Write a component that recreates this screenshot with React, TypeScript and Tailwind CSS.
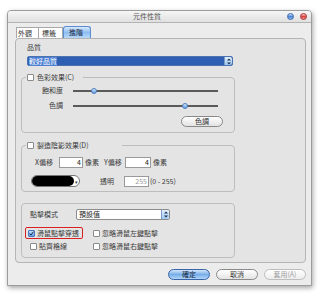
import React from "react";

const F = "font-['Noto_Sans_CJK_TC','Noto_Sans_CJK_SC',sans-serif]";

function Box({ checked }: { checked?: boolean }) {
  return checked ? (
    <span className="flex w-[7px] h-[7px] shrink-0 items-center justify-center rounded-[1px] border border-[#4a78c0] bg-gradient-to-b from-[#c4ddf6] to-[#5d9be0]">
      <svg width="5" height="5" viewBox="0 0 5 5">
        <path d="M0.5 2.5 L2 4 L4.6 0.6" stroke="#15284d" strokeWidth="1" fill="none" />
      </svg>
    </span>
  ) : (
    <span className="block w-[7px] h-[7px] shrink-0 rounded-[1px] border border-[#8a8a8a] bg-white" />
  );
}

function Stepper() {
  return (
    <span className="flex w-[8px] h-full shrink-0 flex-col items-center justify-center rounded-r-[2px] border-l border-[#7a9cc8] bg-gradient-to-b from-[#e4f0fb] to-[#9cc6ef]">
      <svg width="4" height="7" viewBox="0 0 4 7">
        <path d="M0 2.6 L2 0.4 L4 2.6 Z M0 4.4 L2 6.6 L4 4.4 Z" fill="#1d3050" />
      </svg>
    </span>
  );
}

function Slider({ pos }: { pos: number }) {
  return (
    <div className="relative w-[145px] h-[2px] bg-[#5a5a5a]">
      <span
        className="absolute top-[-2px] w-[6px] h-[6px] rounded-full border border-[#4f7dc0] bg-gradient-to-b from-[#d6e8fa] to-[#5f9ae0]"
        style={{ left: pos - 3 }}
      />
    </div>
  );
}

function Input({ value, w, dim }: { value: string; w: string; dim?: boolean }) {
  return (
    <span
      className={`flex h-[11px] items-center justify-end border border-[#9a9a9a] bg-white pr-[1px] ${w} ${dim ? "text-[#9a9a9a]" : "text-[#222]"}`}
    >
      {value}
    </span>
  );
}

export default function App() {
  return (
    <div className={`w-[320px] h-[295px] overflow-hidden bg-white pt-[10px] pl-[7px] text-[7px] leading-[9px] text-[#3a3a3a] ${F}`}>
      <div className="flex w-[305px] h-[276px] flex-col rounded-t-[4px] border border-[#9c9c9c] bg-[#ececec] shadow-[1px_2px_5px_rgba(0,0,0,0.35)]">
        {/* title bar */}
        <div className="flex h-[12px] shrink-0 items-center rounded-t-[3px] border-b border-[#b4b4b4] bg-gradient-to-b from-[#f6f6f6] to-[#e0e0e0] pl-[125px] pr-[4px]">
          <span className="text-[#555]">元件性質</span>
          <div className="ml-auto flex gap-[6px]">
            <span className="block w-[7px] h-[7px] rounded-full border border-[#3c66a8] bg-gradient-to-b from-[#d2e6fb] via-[#4c86d6] to-[#8fc0f2]" />
            <span className="block w-[7px] h-[7px] rounded-full border border-[#a83030] bg-gradient-to-b from-[#fbd2d2] via-[#d64444] to-[#f29090]" />
          </div>
        </div>

        {/* body */}
        <div className="pl-[7px]">
          {/* tabs */}
          <div className="mt-[4px] ml-[1px] flex h-[11px] items-end">
            <span className="flex h-[11px] w-[23px] items-center border border-b-0 border-[#a8a8a8] bg-white pl-[1px] text-[#333]">外觀</span>
            <span className="flex h-[11px] w-[24px] items-center border border-b-0 border-l-0 border-[#a8a8a8] bg-white pl-[3px] text-[#333]">標籤</span>
            <span className="flex h-[12px] w-[28px] items-center rounded-t-[3px] border border-b-0 border-[#5b8cd0] bg-gradient-to-b from-[#d8eafc] via-[#8dbdf0] to-[#b8d9f8] pl-[5px] text-[#1c2c48]">進階</span>
          </div>

          {/* panel */}
          <div className="w-[291px] h-[225px] rounded-[4px] border border-[#b4b4b4] bg-[#e4e4e4]">
            <div className="mt-[4px] ml-[11px] h-[9px]">品質</div>
            <div className="mt-[4px] ml-[11px] flex h-[10px] w-[206px] items-stretch rounded-[2px] border border-[#4d72b0] bg-[#2f5fb2]">
              <span className="flex flex-1 items-center pl-[1px] text-white">
                <span className="bg-[#4a7fd2] px-[0px]">較好品質</span>
              </span>
              <Stepper />
            </div>

            {/* group 1 */}
            <div className="relative mt-[11px] ml-[5px] w-[214px] h-[56px] rounded-[4px] border border-[#bdbdbd]">
              <div className="absolute top-[-5px] left-[4px] flex w-[57px] items-center gap-[3px] bg-[#e4e4e4] pl-[1px]">
                <Box />
                <span>色彩效果(C)</span>
              </div>
              <div className="mt-[8px] flex h-[9px] items-center">
                <span className="w-[41px] text-right">飽和度</span>
                <div className="ml-[10px]">
                  <Slider pos={21} />
                </div>
              </div>
              <div className="mt-[6px] flex h-[9px] items-center">
                <span className="w-[41px] text-right">色調</span>
                <div className="ml-[10px]">
                  <Slider pos={112} />
                </div>
              </div>
              <div className="mt-[6px] flex justify-end pr-[11px]">
                <span className="flex h-[11px] w-[42px] items-center justify-center rounded-full border border-[#8a8a8a] bg-gradient-to-b from-white to-[#e2e2e2] text-[#333]">色調</span>
              </div>
            </div>

            {/* group 2 */}
            <div className="relative mt-[12px] ml-[5px] w-[214px] h-[47px] rounded-[4px] border border-[#bdbdbd]">
              <div className="absolute top-[-5px] left-[4px] flex w-[96px] items-center gap-[3px] bg-[#e4e4e4] pl-[1px]">
                <Box />
                <span>製造陰影效果(D)</span>
              </div>
              <div className="mt-[11px] flex h-[11px] items-center pl-[13px]">
                <span className="w-[24px]">X偏移</span>
                <Input value="4" w="w-[24px]" />
                <span className="ml-[2px] w-[17px]">像素</span>
                <span className="ml-[2px] w-[21px]">Y偏移</span>
                <Input value="4" w="w-[26px]" />
                <span className="ml-[2px]">像素</span>
              </div>
              <div className="mt-[7px] flex h-[12px] items-center pl-[9px]">
                <span className="flex h-[12px] w-[49px] items-stretch overflow-hidden rounded-full border border-[#777] bg-white">
                  <span className="flex-1 rounded-r-full bg-black" />
                  <span className="flex w-[5px] items-center justify-center text-[5px] text-[#333]">▾</span>
                </span>
                <span className="ml-[20px] w-[14px]">透明</span>
                <span className="ml-[10px]">
                  <Input value="255" w="w-[25px]" dim />
                </span>
                <span className="ml-[1px]">(0 - 255)</span>
              </div>
            </div>

            {/* group 3 */}
            <div className="mt-[11px] ml-[5px] w-[214px] h-[55px] rounded-[4px] border border-[#bdbdbd]">
              <div className="mt-[5px] flex h-[11px] items-center pl-[8px]">
                <span className="w-[46px]">點擊模式</span>
                <span className="flex h-[11px] w-[94px] items-stretch rounded-[2px] border border-[#8c8c8c] bg-white">
                  <span className="flex flex-1 items-center pl-[2px] text-[#222]">預設值</span>
                  <Stepper />
                </span>
              </div>
              <div className="mt-[7px] grid h-[12px] grid-cols-[68px_1fr] items-center pl-[3px]">
                <span className="flex h-[12px] w-[58px] items-center gap-[2px] rounded-[2px] border border-[#d82020] pl-[2px]">
                  <Box checked />
                  <span>滑鼠點擊穿透</span>
                </span>
                <span className="flex items-center gap-[2px]">
                  <Box />
                  <span>忽略滑鼠左鍵點擊</span>
                </span>
              </div>
              <div className="mt-[2px] grid h-[10px] grid-cols-[68px_1fr] items-center pl-[3px]">
                <span className="flex items-center gap-[2px] pl-[5px]">
                  <Box />
                  <span>貼齊格線</span>
                </span>
                <span className="flex items-center gap-[2px]">
                  <Box />
                  <span>忽略滑鼠右鍵點擊</span>
                </span>
              </div>
            </div>
          </div>
        </div>

        {/* buttons */}
        <div className="mt-[6px] flex justify-end gap-[6px] pr-[5px]">
          <span className="flex h-[11px] w-[42px] items-center justify-center rounded-full border border-[#3a64a8] bg-gradient-to-b from-[#d4e7fa] via-[#78aee8] to-[#b2d6f8] text-[#14243f]">確定</span>
          <span className="flex h-[11px] w-[42px] items-center justify-center rounded-full border border-[#8a8a8a] bg-gradient-to-b from-white to-[#e4e4e4] text-[#333]">取消</span>
          <span className="flex h-[11px] w-[42px] items-center justify-center rounded-full border border-[#bdbdbd] bg-gradient-to-b from-white to-[#ececec] text-[#a0a0a0]">套用(A)</span>
        </div>
      </div>
    </div>
  );
}
